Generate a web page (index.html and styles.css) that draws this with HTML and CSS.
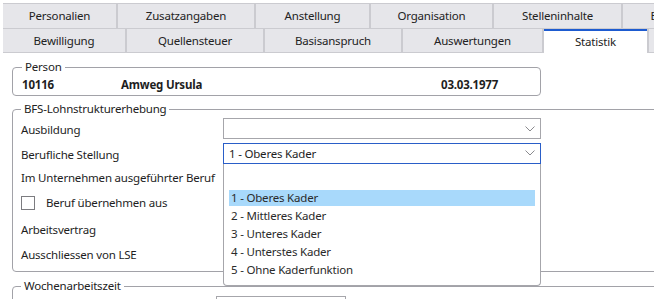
FILE: index.html
```html
<!DOCTYPE html>
<html lang="de">
<head>
    <meta charset="UTF-8">
    <title>Statistik</title>
    <link rel="stylesheet" href="styles.css">
</head>
<body>
    <div class="tabstrip">
        <div class="tabrow row1">
            <div class="tab">Personalien</div>
            <div class="tab">Zusatzangaben</div>
            <div class="tab">Anstellung</div>
            <div class="tab">Organisation</div>
            <div class="tab">Stelleninhalte</div>
            <div class="tab">Bemerkungen</div>
        </div>
        <div class="tabrow row2">
            <div class="tab">Bewilligung</div>
            <div class="tab">Quellensteuer</div>
            <div class="tab">Basisanspruch</div>
            <div class="tab">Auswertungen</div>
            <div class="tab active">Statistik</div>
            <div class="tab"></div>
        </div>
    </div>

    <div class="content">
        <fieldset class="group person">
            <legend>Person</legend>
            <div class="person-row">
                <span class="pnr">10116</span>
                <span class="pname">Amweg Ursula</span>
                <span class="pdate">03.03.1977</span>
            </div>
        </fieldset>

        <fieldset class="group bfs">
            <legend>BFS-Lohnstrukturerhebung</legend>
            <div class="row r-ausbildung">
                <label>Ausbildung</label>
                <div class="combo"><span></span><svg class="chev" width="10" height="6" viewBox="0 0 10 6"><path d="M0.5 0.5 L5 5 L9.5 0.5" fill="none" stroke="#8a8a8e" stroke-width="1"/></svg></div>
            </div>
            <div class="row r-stellung">
                <label>Berufliche Stellung</label>
                <div class="combo-wrap">
                    <div class="combo open"><span>1 - Oberes Kader</span><svg class="chev" width="10" height="6" viewBox="0 0 10 6"><path d="M0.5 0.5 L5 5 L9.5 0.5" fill="none" stroke="#8a8a8e" stroke-width="1"/></svg></div>
                    <ul class="popup">
                        <li class="selected">1 - Oberes Kader</li>
                        <li>2 - Mittleres Kader</li>
                        <li>3 - Unteres Kader</li>
                        <li>4 - Unterstes Kader</li>
                        <li>5 - Ohne Kaderfunktion</li>
                    </ul>
                </div>
            </div>
            <div class="row r-beruf">
                <label>Im Unternehmen ausgeführter Beruf</label>
            </div>
            <div class="row r-check">
                <label class="check"><span class="box"></span>Beruf übernehmen aus</label>
            </div>
            <div class="row r-vertrag">
                <label>Arbeitsvertrag</label>
            </div>
            <div class="row r-lse">
                <label>Ausschliessen von LSE</label>
            </div>
        </fieldset>

        <fieldset class="group woche">
            <legend>Wochenarbeitszeit</legend>
            <div class="woche-row">
                <div class="textbox"></div>
            </div>
        </fieldset>
    </div>
</body>
</html>
```

FILE: styles.css
```css
body {
    margin: 0;
    width: 654px;
    height: 299px;
    overflow: hidden;
    background: #fff;
    font-family: "Noto Sans", "Open Sans", sans-serif;
    font-size: 11.5px;
    letter-spacing: -0.2px;
    color: #1e1e1e;
}

/* tabs */
.tabstrip {
    margin: 3px 0 0 3px;
    background: #cbcbd0;
    padding: 1px 0 2px 0;
    display: grid;
    row-gap: 1px;
    overflow: hidden;
}
.tabrow {
    display: grid;
    column-gap: 2px;
}
.row1 {
    grid-template-columns: 113px 136px 113px 121px 127px 130px;
    height: 24px;
}
.row2 {
    grid-template-columns: 122px 136px 136px 139px 103px 60px;
    height: 22px;
}
.tab {
    background: #e6e6ea;
    text-align: center;
    line-height: 24px;
    color: #222;
    white-space: nowrap;
}
.row2 .tab {
    line-height: 23px;
}
.tab.active {
    background: #fff;
    border-top: 2px solid #1d5bd0;
    margin-bottom: -2px;
    line-height: 21px;
}

/* groups */
.content {
    padding-left: 12px;
}
.group {
    margin: 0;
    border: 1px solid #a2a2a8;
    border-radius: 4px;
    padding: 0 9px;
}
.group legend {
    padding: 0 3px;
    line-height: 16px;
    color: #222;
}
.person {
    width: 509px;
    margin-top: 6px;
    padding-bottom: 2px;
}
.person-row {
    display: flex;
    font-weight: bold;
    line-height: 17px;
    padding-top: 1px;
}
.pnr {
    width: 99px;
}
.pname {
    width: 320px;
}

.bfs {
    width: 700px;
    margin-top: 5px;
    padding-bottom: 4px;
    padding-left: 8px;
}
.row {
    display: flex;
    align-items: center;
    height: 25px;
}
.r-stellung {
    height: 24px;
}
.r-beruf {
    height: 23px;
}
.r-check {
    height: 27px;
}
.r-vertrag {
    height: 26px;
}
.row label {
    width: 202px;
    white-space: nowrap;
}
.combo-wrap {
    position: relative;
    margin-bottom: 2px;
}
.combo {
    width: 316px;
    height: 19px;
    border: 1px solid #a6a6ab;
    display: flex;
    align-items: center;
    justify-content: space-between;
}
.r-ausbildung .combo {
    margin-bottom: 2px;
}
.combo span {
    padding-left: 5px;
}
.combo.open {
    border-color: #2a5ec8;
}
.chev {
    margin-right: 5px;
}
.check {
    display: flex;
    align-items: center;
}
.box {
    width: 12px;
    height: 12px;
    border: 1px solid #7c7c80;
    margin-right: 11px;
    background: #fff;
}

.popup {
    position: absolute;
    left: 0;
    top: 21px;
    width: 306px;
    margin: 0;
    padding: 26px 5px 5px 5px;
    list-style: none;
    background: #fff;
    border: 1px solid #a6a6ab;
    border-top: none;
    border-radius: 0 0 4px 4px;
    z-index: 2;
}
.popup li {
    line-height: 16px;
    margin-bottom: 2px;
    padding-left: 2px;
    color: #2a2a2a;
}
.popup li.selected {
    background: #a8d9fb;
}

.woche {
    width: 700px;
    margin-top: 6px;
    height: 40px;
    padding-left: 8px;
}
.woche-row {
    padding: 2px 0 0 195px;
}
.textbox {
    width: 128px;
    height: 20px;
    border: 1px solid #a6a6ab;
}
```
